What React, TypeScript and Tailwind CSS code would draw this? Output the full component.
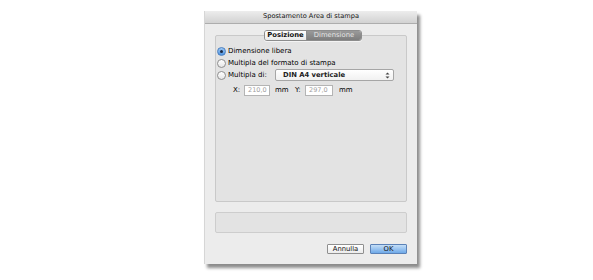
import React from "react";

const font = { fontFamily: '"DejaVu Sans", "Liberation Sans", sans-serif' };

function Radio({ on }: { on?: boolean }) {
  return on ? (
    <div className="w-[9px] h-[9px] rounded-full border border-[#4a7fc0] bg-gradient-to-b from-[#9cc7f3] to-[#4f94e0] flex items-center justify-center shrink-0">
      <div className="w-[3px] h-[3px] rounded-full bg-[#1b2a44]" />
    </div>
  ) : (
    <div className="w-[9px] h-[9px] rounded-full border border-[#8e8e8e] bg-gradient-to-b from-[#ffffff] to-[#e6e6e6] shrink-0" />
  );
}

export default function App() {
  return (
    <div className="w-[593px] h-[280px] bg-white pl-[204px] pt-[11px]" style={font}>
      <div className="w-[213px] h-[253px] bg-[#ececec] flex flex-col shadow-[3px_4px_3px_rgba(0,0,0,0.45)] border-l border-[#d6d6d6]">
        <div className="h-[13px] bg-gradient-to-b from-[#ededed] to-[#d2d2d2] border-b border-[#adadad] flex items-center justify-center text-[6.6px] text-[#111]">
          Spostamento Area di stampa
        </div>
        <div className="px-[10px] pt-[11px] flex flex-col">
          <div className="relative h-[167px] rounded-[2px] border border-[#c9c9c9] bg-[#e3e3e3]">
            <div className="absolute left-[48px] top-[-6px] h-[11px] flex rounded-[3px] border border-[#8d8d8d] overflow-hidden text-[6.8px] font-bold shadow-[0_1px_0_rgba(255,255,255,0.6)]">
              <div className="w-[42px] bg-gradient-to-b from-[#ffffff] to-[#eaeaea] text-[#111] flex items-center justify-center border-r border-[#8d8d8d]">
                Posizione
              </div>
              <div className="w-[54px] bg-gradient-to-b from-[#9a9a9a] to-[#7d7d7d] text-[#e6e6e6] flex items-center justify-center font-normal">
                Dimensione
              </div>
            </div>
            <div className="pt-[9px] pl-[1px] flex flex-col text-[7px] text-[#000]">
              <div className="h-[12px] flex items-center gap-[2px]">
                <Radio on />
                <span>Dimensione libera</span>
              </div>
              <div className="h-[12px] flex items-center gap-[2px]">
                <Radio />
                <span>Multipla del formato di stampa</span>
              </div>
              <div className="h-[12px] flex items-center gap-[2px]">
                <Radio />
                <span className="w-[45px]">Multipla di:</span>
                <div className="w-[119px] h-[12px] rounded-[2px] border border-[#a6a6a6] bg-gradient-to-b from-[#ffffff] to-[#f1f1f1] flex items-center pl-[7px] pr-[3px] text-[6.8px] font-bold text-[#222]">
                  <span className="flex-1">DIN A4 verticale</span>
                  <svg width="5" height="7" viewBox="0 0 5 7">
                    <path d="M0.5 2.6 L2.5 0.6 L4.5 2.6 Z" fill="#444" />
                    <path d="M0.5 4.4 L2.5 6.4 L4.5 4.4 Z" fill="#444" />
                  </svg>
                </div>
              </div>
              <div className="h-[11px] mt-[4px] flex items-center pl-[16px]">
                <span className="w-[11px]">X:</span>
                <div className="w-[26px] h-[11px] border border-[#b4b4b4] bg-white flex items-center pl-[3px] text-[#a0a0a0] text-[6.5px]">
                  210,0
                </div>
                <span className="ml-[5px] w-[20px]">mm</span>
                <span className="w-[10px]">Y:</span>
                <div className="w-[28px] h-[11px] border border-[#b4b4b4] bg-white flex items-center pl-[3px] text-[#a0a0a0] text-[6.5px]">
                  297,0
                </div>
                <span className="ml-[6px]">mm</span>
              </div>
            </div>
          </div>
          <div className="mt-[10px] h-[21px] rounded-[2px] border border-[#cdcdcd] bg-[#e3e3e3]" />
          <div className="mt-[11px] flex justify-end gap-[6px] pr-[0px]">
            <div className="w-[37px] h-[10px] border border-[#8f8f8f] rounded-[1px] bg-gradient-to-b from-[#ffffff] to-[#ececec] flex items-center justify-center text-[6.8px] text-[#111]">
              Annulla
            </div>
            <div className="w-[37px] h-[10px] border border-[#5b82b8] rounded-[1px] bg-gradient-to-b from-[#c4def7] to-[#6ea9e8] flex items-center justify-center text-[6.8px] text-[#111]">
              OK
            </div>
          </div>
        </div>
      </div>
    </div>
  );
}
